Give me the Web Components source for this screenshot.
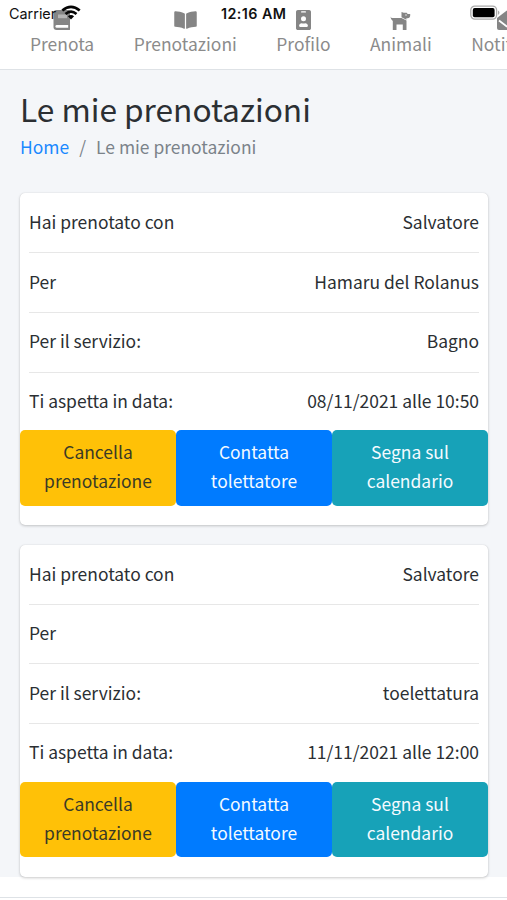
<!DOCTYPE html>
<html lang="it">
<head>
<meta charset="utf-8">
<title>Le mie prenotazioni</title>
<style>
html,body{margin:0;height:900px;overflow:hidden;background:#fff}
body{font-family:"Noto Sans CJK JP","Noto Sans",sans-serif;font-size:17.45px;line-height:29.25px;color:#2b2f33;--line:#e7e7e7}
</style>
</head>
<body>
<booking-app></booking-app>
<script>
const define=(name,html)=>customElements.define(name,class extends HTMLElement{
  constructor(){
    super();
    const t=document.createElement('template');
    t.innerHTML=html;
    this.attachShadow({mode:'open'}).append(t.content.cloneNode(true));
  }
});

define('nav-item',`<style>
:host{display:flex;flex-direction:column;align-items:center;flex:none;color:#8b8b8b;white-space:nowrap}
.icon{height:20px;display:flex;align-items:center}
.label{height:27px;line-height:27px}
</style><div class="icon"><slot name="icon"></slot></div><div class="label"><slot></slot></div>`);

define('status-bar',`<style>
:host{position:absolute;left:0;top:0;width:507px;height:28px;display:block;font-family:"Inter","Liberation Sans",sans-serif;color:#111;font-size:14.4px;line-height:28px}
span,svg{position:absolute;top:0;white-space:nowrap}
.time{left:221px;font-weight:600;font-size:14.3px;letter-spacing:.45px}
.carrier{left:9px}
</style>
<span class="carrier">Carrier</span>
<svg style="left:61px;top:5px" width="20" height="16" viewBox="0 0 20 16" fill="none" stroke="#050505" stroke-width="2.7"><path d="M1.3 5.6Q10 -1.9 18.7 5.6M4.5 9Q10 4.2 15.5 9"/><path d="M6.9 11.3Q10 8.8 13.1 11.3L10 14.6Z" fill="#050505" stroke="none"/></svg>
<span class="time">12:16 AM</span>
<svg style="left:470px;top:5px" width="31" height="16" viewBox="0 0 31 16"><rect x=".8" y="1.1" width="25.8" height="13" rx="4" fill="#fff" stroke="#aaa" stroke-width="1.3"/><rect x="2.8" y="3.1" width="21.8" height="9.2" rx="1.8" fill="#000"/><path d="M28 5.5q3 2.1 0 4.5z" fill="#aaa"/></svg>`);

define('top-nav',`<style>
:host{display:block;position:relative;box-sizing:border-box;height:70px;background:#fff;border-bottom:1px solid #dee2e6;overflow:hidden}
nav{display:flex;gap:39.5px;padding:10px 0 0 30px}
svg{display:block;fill:#858585}
</style>
<nav>
<nav-item><svg slot="icon" width="18" height="20" viewBox="0 0 18 20"><path d="M3.500 0H16q1 0 1 1v18.500q0 .5-1 .5H3.500Q.5 20 .5 17V3Q.5 0 3.500 0z"/><path fill="#fff" d="M3.800 15h11.400v2.800H3.800q-1.400 0-1.400-1.400T3.800 15z"/><path fill="#b5b5b5" d="M5 4.500h9v3.700H5z"/></svg>Prenota</nav-item>
<nav-item><svg slot="icon" width="23" height="20" viewBox="0 0 576 512"><path d="M542 32c-55 3-164 14-231 56-5 3-7 8-7 13v364c0 11 12 18 23 13 69-35 169-44 219-47 17-1 30-15 30-31V64c0-18-15-33-34-32zM265 88C198 46 89 35 34 32 15 31 0 46 0 64v336c0 16 13 30 30 31 50 3 150 12 219 47 11 5 23-2 23-13V101c0-5-2-10-7-13z"/></svg>Prenotazioni</nav-item>
<nav-item><svg slot="icon" width="15" height="20" viewBox="0 0 384 512"><path d="M336 0H48C22 0 0 22 0 48v416c0 26 22 48 48 48h288c26 0 48-22 48-48V48c0-26-22-48-48-48z"/><path fill="#fff" d="M144 32h96a16 16 0 0 1 0 32h-96a16 16 0 0 1 0-32zM192 160a64 64 0 1 1 0 128 64 64 0 0 1 0-128zM80 397c0-32 30-58 67-58 30 8 60 8 90 0 37 0 67 26 67 58v13c0 12-10 22-22 22H102c-12 0-22-10-22-22z"/></svg>Profilo</nav-item>
<nav-item><svg slot="icon" width="21" height="20" viewBox="0 0 21 20"><path d="M.5 6.500q.4 1.500 2 1.500h9l5 2.600V20h-3.700v-5.500H6.500V20H2.800v-9Q.5 9.500.5 6.500zM11.500 2l2.200.8h3l1 1.200h2.500v1.600c0 1.700-1 2.600-2.600 2.600h-1.200v1.600l-4.900-2.500z"/><circle cx="16" cy="5" r=".65" fill="#fff"/></svg>Animali</nav-item>
<nav-item><svg slot="icon" width="23" height="20" viewBox="0 0 23 20"><path d="M0 8L9.500.8Q11.500-.6 13.500.8L23 8v10q0 2-2 2H2q-2 0-2-2z"/><path d="M2 10.500l7.500 5.800q2 1.400 4 0l7.500-5.800" fill="none" stroke="#fff" stroke-width="1.800"/></svg>Notifiche</nav-item>
</nav>
<status-bar></status-bar>`);

define('page-heading',`<style>
:host{display:block;height:123px;box-sizing:border-box;padding:17px 20px 0}
h1{margin:0;font-weight:400;font-size:31.65px;line-height:42px;white-space:nowrap}
nav{display:flex;line-height:32px;padding-top:2px;color:#7b838a;white-space:nowrap}
a{color:#1a88ff}
i{font-style:normal;width:27px;text-align:center}
</style><h1><slot></slot></h1><nav><a>Home</a><i>/</i><span>Le mie prenotazioni</span></nav>`);

define('detail-row',`<style>
:host{display:flex;justify-content:space-between;align-items:center;box-sizing:border-box;height:59.85px;margin:0 9px;padding-bottom:2px;border-bottom:1.5px solid var(--line);white-space:nowrap}
:host([last]){border-bottom:0;height:57.500px}
</style><span><slot></slot></span><span><slot name="value"></slot></span>`);

define('action-button',`<style>
:host{flex:1;box-sizing:border-box;height:75.500px;padding:7px 10px;border-radius:5px;text-align:center;color:#f4faff;background:#007bff;white-space:nowrap}
:host([kind=warning]){background:#ffc107;color:#3a3a26}
:host([kind=info]){background:#17a2b8}
</style><slot></slot>`);

define('booking-card',`<style>
:host{display:block;box-sizing:border-box;height:332px;margin:0 19px 19.800px 20px;background:#fff;border-radius:5px;box-shadow:0 0 1px rgba(0,0,0,.15),0 1px 3px rgba(0,0,0,.2)}
.actions{display:flex}
</style>
<detail-row>Hai prenotato con<slot name="groomer" slot="value"></slot></detail-row>
<detail-row>Per<slot name="pet" slot="value"></slot></detail-row>
<detail-row>Per il servizio:<slot name="service" slot="value"></slot></detail-row>
<detail-row last>Ti aspetta in data:<slot name="date" slot="value"></slot></detail-row>
<div class="actions">
<action-button kind="warning">Cancella<br>prenotazione</action-button>
<action-button>Contatta<br>tolettatore</action-button>
<action-button kind="info">Segna sul<br>calendario</action-button>
</div>`);

define('booking-app',`<style>
:host{display:block;height:900px;overflow:hidden;background:#fff}
main{height:807px;background:#f4f6f9}
footer{margin-top:20px;border-top:1px solid #dee2e6;height:2px}
</style>
<top-nav></top-nav>
<main>
<page-heading>Le mie prenotazioni</page-heading>
<booking-card><span slot="groomer">Salvatore</span><span slot="pet">Hamaru del Rolanus</span><span slot="service">Bagno</span><span slot="date">08/11/2021 alle 10:50</span></booking-card>
<booking-card><span slot="groomer">Salvatore</span><span slot="service">toelettatura</span><span slot="date">11/11/2021 alle 12:00</span></booking-card>
</main>
<footer></footer>`);
</script>
</body>
</html>
